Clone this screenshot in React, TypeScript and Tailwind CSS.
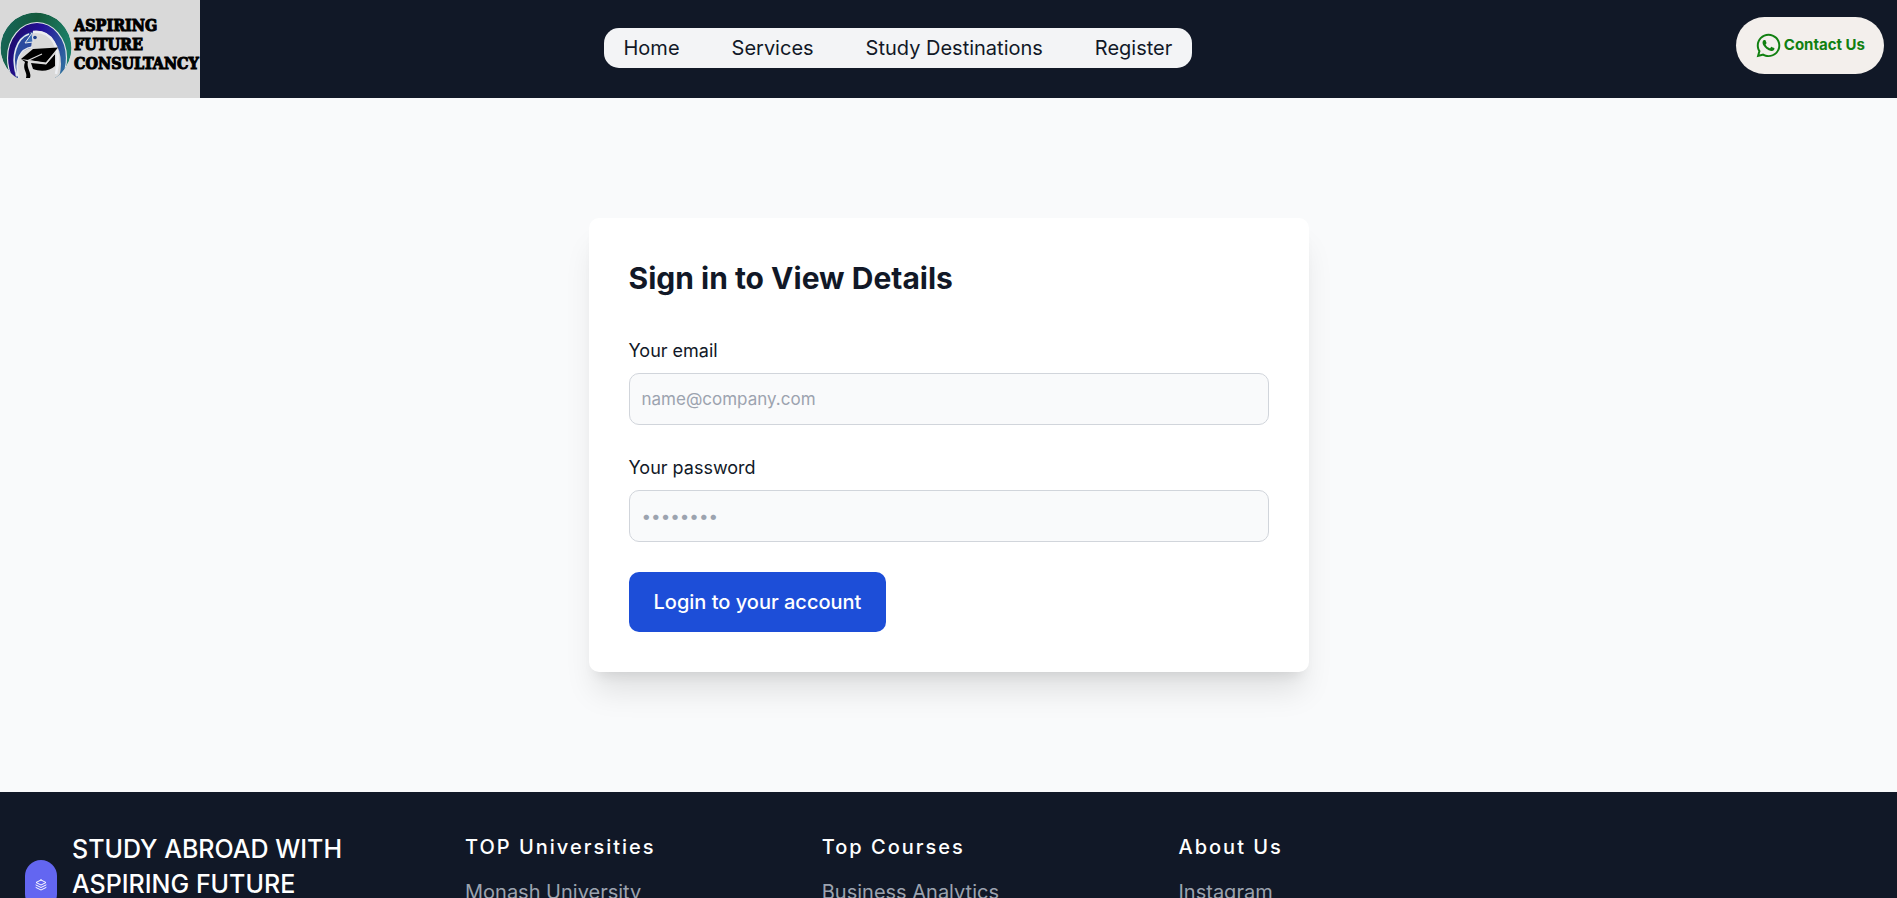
import { FaWhatsapp } from "react-icons/fa";

const navLinks = ["Home", "Services", "Study Destinations", "Register"];

const footerColumns = [
  { title: "TOP Universities", links: ["Monash University"] },
  { title: "Top Courses", links: ["Business Analytics"] },
  { title: "About Us", links: ["Instagram"] },
];

function LogoMark() {
  return (
    <svg viewBox="0 0 72 68" className="h-[68px] w-[72px] shrink-0" aria-hidden="true">
      <defs>
        <linearGradient id="outer" x1="0" y1="0" x2="1" y2="0.3">
          <stop offset="0" stopColor="#17695f" />
          <stop offset="0.5" stopColor="#145a3c" />
          <stop offset="1" stopColor="#1c8069" />
        </linearGradient>
        <linearGradient id="inner" x1="0" y1="0" x2="1" y2="0.5">
          <stop offset="0" stopColor="#1d0a5c" />
          <stop offset="0.5" stopColor="#23109a" />
          <stop offset="1" stopColor="#2f6aa0" />
        </linearGradient>
        <clipPath id="disc">
          <path d="M0 0H72V66H0Z" />
        </clipPath>
        <clipPath id="ring">
          <circle cx="36" cy="36" r="35.5" />
        </clipPath>
      </defs>
      <g clipPath="url(#disc)">
        <g clipPath="url(#ring)">
          <circle cx="36" cy="36" r="35.5" fill="url(#outer)" />
          <ellipse cx="37" cy="46" rx="29.5" ry="35.5" fill="url(#inner)" stroke="#dfe3ea" strokeWidth="1.2" />
          <ellipse cx="37.5" cy="52" rx="23.5" ry="33" fill="#d9d9d9" />
          <path d="M17 66C9 47 14 22 33 20L31 36C20 38 14 50 18 66Z" fill="#2b4a9e" />
          <path d="M17 64C10 44 17 26 29 22M19 66C14 48 20 37 32 35" fill="none" stroke="#e3e6ee" strokeWidth="1.6" />
          <path d="M33 20C52 18 62 36 56 62" fill="none" stroke="#eceef2" strokeWidth="2.5" />
        </g>
        <path d="M25 31L32 21L33 30Z" fill="#3f6fb5" stroke="#e3e6ee" strokeWidth="1" />
        <circle cx="35" cy="25.500" r="1.800" fill="#1e3f8a" />
        <path d="M21 47L33 37L58 35.500L46 50.500Z" fill="#000" />
        <path d="M31 51L46 52.500L55 42L55 54C50 59 41 60 33 57Z" fill="#000" />
        <path d="M42 42L28 48.500L46 51.500L55 41" fill="none" stroke="#d9d9d9" strokeWidth="1.2" />
        <path d="M21 47L28 49.500C26 56 32 61 30 66H26C28 60 22 58 25 50Z" fill="#000" />
      </g>
    </svg>
  );
}

function LayersIcon() {
  return (
    <svg
      viewBox="0 0 24 24"
      className="h-3 w-3"
      fill="none"
      stroke="currentColor"
      strokeWidth="2"
      strokeLinecap="round"
      strokeLinejoin="round"
      aria-hidden="true"
    >
      <path d="M12 2L2 7l10 5 10-5-10-5zM2 17l10 5 10-5M2 12l10 5 10-5" />
    </svg>
  );
}

function Header() {
  return (
    <header className="flex items-start justify-between bg-[#111827] pr-[13px]">
      <a href="#" className="flex h-[98px] w-[200px] items-start gap-[2px] bg-[#d9d9d9] pt-3 text-black">
        <LogoMark />
        <span className="pt-1 font-['DejaVu_Serif_Condensed','DejaVu_Serif',serif] text-[16px] leading-[19px] font-bold [-webkit-text-stroke:1px_black]">
          ASPIRING
          <br />
          FUTURE
          <br />
          CONSULTANCY
        </span>
      </a>
      <nav className="mt-7 mr-[140px] flex h-10 items-center gap-[52px] rounded-[15px] bg-gray-100 px-5 text-[20px] text-[#111827]">
        {navLinks.map((link) => (
          <a key={link} href="#">
            {link}
          </a>
        ))}
      </nav>
      <button
        type="button"
        className="mt-[17px] flex h-[57px] items-center gap-[2px] rounded-full bg-[#f3efec] px-[19px] text-[15px] font-bold text-[#118011]"
      >
        <FaWhatsapp size={27} />
        Contact Us
      </button>
    </header>
  );
}

const fieldClass =
  "block h-[52px] w-full rounded-[10px] border border-[#d1d5db] bg-[#f9fafb] px-3 text-[17px] text-[#111827] placeholder:text-[#9ca3af]";

function SignIn() {
  return (
    <main className="flex justify-center bg-[#f9fafb] py-[120px]">
      <section className="w-full max-w-[720px] rounded-[10px] bg-white p-10 shadow-[0_25px_31px_-6px_rgba(0,0,0,0.1),0_10px_13px_-8px_rgba(0,0,0,0.1)]">
        <h1 className="text-[30px] leading-10 font-bold">Sign in to View Details</h1>
        <form className="mt-10 flex flex-col items-start gap-[30px]" onSubmit={(e) => e.preventDefault()}>
          <div className="w-full">
            <label htmlFor="email" className="mb-[10px] block text-[18px] leading-[25px]">
              Your email
            </label>
            <input id="email" type="email" placeholder="name@company.com" className={fieldClass} />
          </div>
          <div className="w-full">
            <label htmlFor="password" className="mb-[10px] block text-[18px] leading-[25px]">
              Your password
            </label>
            <input id="password" type="password" placeholder="••••••••" className={fieldClass} />
          </div>
          <button
            type="submit"
            className="h-[60px] rounded-[10px] bg-[#1d4ed8] px-[25px] text-[20px] font-medium text-white"
          >
            Login to your account
          </button>
        </form>
      </section>
    </main>
  );
}

function Footer() {
  return (
    <footer className="flex bg-[#111827] px-[25px] pt-10">
      <a href="#" className="flex w-[320px] shrink-0 items-start gap-[15px] text-white">
        <span className="mt-7 flex h-[50px] w-8 shrink-0 items-center justify-center rounded-full bg-[#6366f1]">
          <LayersIcon />
        </span>
        <span className="text-[25px] leading-[35px] font-medium">STUDY ABROAD WITH ASPIRING FUTURE</span>
      </a>
      <div className="grid grow grid-cols-4 pl-[100px]">
        {footerColumns.map((column) => (
          <div key={column.title} className="px-5">
            <h2 className="mb-[15px] text-[20px] leading-[30px] font-medium tracking-widest text-white">
              {column.title}
            </h2>
            <ul className="text-[20px] leading-[30px] text-[#9ca3af]">
              {column.links.map((link) => (
                <li key={link}>
                  <a href="#">{link}</a>
                </li>
              ))}
            </ul>
          </div>
        ))}
      </div>
    </footer>
  );
}

export default function App() {
  return (
    <div className="font-[Inter,sans-serif] text-[#111827]">
      <Header />
      <SignIn />
      <Footer />
    </div>
  );
}
